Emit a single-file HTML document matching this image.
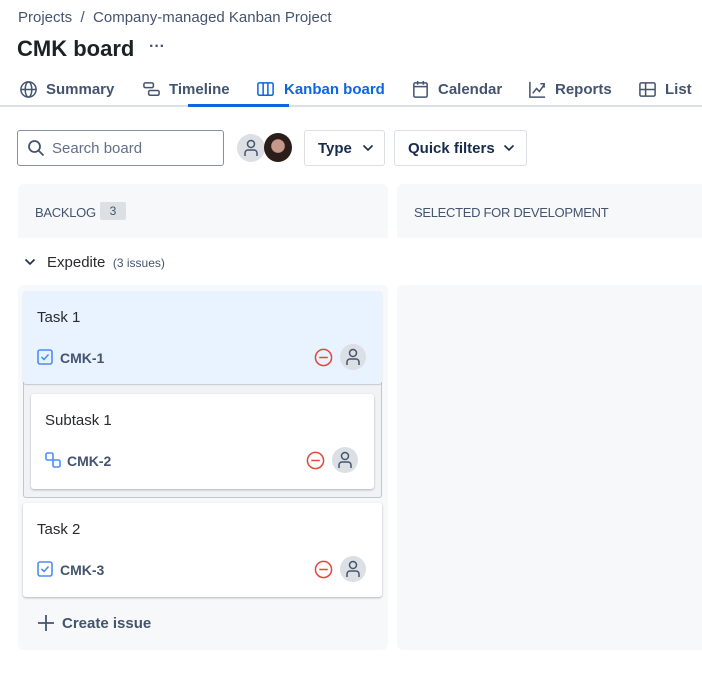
<!DOCTYPE html>
<html><head><style>
*{box-sizing:border-box;margin:0;padding:0}
body{width:702px;height:687px;overflow:hidden;background:#fff;font-family:"Liberation Sans",sans-serif;color:#172b4d;position:relative}
.a{position:absolute}
.txt{color:#44546f}
.btn{position:absolute;top:130px;height:36px;border:1px solid #dcdfe4;border-radius:3px;font-size:15px;color:#172b4d;font-weight:bold;display:flex;align-items:center;padding-left:13px}
.card{position:absolute;background:#fff;border-radius:3px;box-shadow:0 1px 2px rgba(9,30,66,.3)}
.t{position:absolute;left:14px;top:18px;font-size:15px;color:#292a2e}
.k{position:absolute;font-size:14px;color:#44546f;font-weight:bold}
.av{position:absolute;width:26px;height:26px;border-radius:50%;background:#dcdfe4}
</style></head><body>
<div class="a txt" style="left:18px;top:9px;font-size:15px">Projects&nbsp;&nbsp;/&nbsp;&nbsp;Company-managed Kanban Project</div>
<div class="a" style="left:17px;top:36px;font-size:22px;font-weight:bold;color:#1d2125">CMK board</div>
<div class="a" style="left:149px;top:38px;font-size:16px;font-weight:bold;color:#44546f">···</div>

<div class="a" style="left:0;top:105px;width:702px;height:2px;background:#dcdfe4"></div>
<div class="a" style="left:188px;top:104px;width:101px;height:3px;background:#0c66e4"></div>
<div class="a txt" style="top:80px;left:0;width:702px;height:20px;font-size:15px;font-weight:bold">
<svg class="a" style="left:19px;top:0" width="19" height="19" viewBox="0 0 20 20" fill="none" stroke="#44546f" stroke-width="1.6"><circle cx="10" cy="10" r="8"/><ellipse cx="10" cy="10" rx="3.5" ry="8"/><path d="M2 10h16"/></svg>
<span class="a" style="left:46px;top:1px">Summary</span>
<svg class="a" style="left:142px;top:0" width="19" height="19" viewBox="0 0 20 20" fill="none" stroke="#44546f" stroke-width="1.6"><rect x="2" y="3" width="10" height="5" rx="1.5"/><rect x="7" y="11" width="11" height="5" rx="1.5"/></svg>
<span class="a" style="left:169px;top:1px">Timeline</span>
<svg class="a" style="left:256px;top:0" width="19" height="19" viewBox="0 0 20 20" fill="none" stroke="#0c66e4" stroke-width="1.6"><rect x="2" y="3" width="16" height="13" rx="1.5"/><path d="M7.5 3v13M12.5 3v13"/></svg>
<span class="a" style="left:284px;top:1px;color:#0c66e4">Kanban board</span>
<svg class="a" style="left:411px;top:0" width="19" height="19" viewBox="0 0 20 20" fill="none" stroke="#44546f" stroke-width="1.6"><rect x="3" y="3" width="14" height="15" rx="1.5"/><path d="M3 7h14M7 1v4M13 1v4"/></svg>
<span class="a" style="left:438px;top:1px">Calendar</span>
<svg class="a" style="left:528px;top:0" width="19" height="19" viewBox="0 0 20 20" fill="none" stroke="#44546f" stroke-width="1.6"><path d="M2 2v16h16M5 14l4-5 3 3 5-7M13 4h4v4"/></svg>
<span class="a" style="left:555px;top:1px">Reports</span>
<svg class="a" style="left:638px;top:0" width="19" height="19" viewBox="0 0 20 20" fill="none" stroke="#44546f" stroke-width="1.6"><rect x="2" y="3" width="16" height="14" rx="1.5"/><path d="M2 10h16M8 3v14"/></svg>
<span class="a" style="left:665px;top:1px">List</span>
</div>

<div class="a" style="left:17px;top:130px;width:207px;height:36px;border:1px solid #8590a2;border-radius:3px"></div>
<svg class="a" style="left:27px;top:139px" width="18" height="18" viewBox="0 0 18 18" fill="none" stroke="#44546f" stroke-width="1.8"><circle cx="7.5" cy="7.5" r="5.5"/><path d="M11.5 11.5l5 5"/></svg>
<div class="a" style="left:52px;top:140px;font-size:15px;color:#626f86">Search board</div>
<div class="av" style="left:237px;top:134px;width:28px;height:28px"></div>
<svg class="a" style="left:243px;top:139px" width="16" height="18" viewBox="0 0 16 18" fill="none" stroke="#44546f" stroke-width="1.5"><circle cx="8" cy="5" r="3.5"/><path d="M2 17v-3a3 3 0 0 1 3-3h6a3 3 0 0 1 3 3v3"/></svg>
<div class="a" style="left:264px;top:133px;width:28px;height:29px;border-radius:50%;background:radial-gradient(circle at 50% 45%,#c7988a 0 30%,#2a1d1a 34%)"></div>
<div class="btn" style="left:304px;width:81px">Type <svg style="margin-left:10px" width="12" height="8" viewBox="0 0 12 8" fill="none" stroke="#172b4d" stroke-width="1.6"><path d="M1.5 1.5l4.5 4.5 4.5-4.5"/></svg></div>
<div class="btn" style="left:394px;width:133px">Quick filters <svg style="margin-left:8px" width="12" height="8" viewBox="0 0 12 8" fill="none" stroke="#172b4d" stroke-width="1.6"><path d="M1.5 1.5l4.5 4.5 4.5-4.5"/></svg></div>

<div class="a" style="left:18px;top:184px;width:370px;height:54px;background:#f7f8f9;border-radius:6px 6px 0 0"></div>
<div class="a" style="left:397px;top:184px;width:310px;height:54px;background:#f7f8f9;border-radius:6px 6px 0 0"></div>
<div class="a txt" style="left:35px;top:205px;font-size:13px;letter-spacing:-0.3px">BACKLOG</div>
<div class="a txt" style="left:100px;top:202px;width:26px;height:18px;background:#dcdfe4;border-radius:2px;font-size:12px;text-align:center;line-height:18px">3</div>
<div class="a txt" style="left:414px;top:205px;font-size:13px;letter-spacing:-0.3px">SELECTED FOR DEVELOPMENT</div>

<svg class="a" style="left:24px;top:258px" width="12" height="8" viewBox="0 0 12 8" fill="none" stroke="#172b4d" stroke-width="1.6"><path d="M1.5 1.5l4.5 4.5 4.5-4.5"/></svg>
<div class="a" style="left:47px;top:254px;font-size:15px;color:#292a2e">Expedite <span style="font-size:12px;color:#44546f">&nbsp;(3 issues)</span></div>

<div class="a" style="left:18px;top:285px;width:370px;height:365px;background:#f7f8f9;border-radius:6px"></div>
<div class="a" style="left:397px;top:285px;width:310px;height:365px;background:#f7f8f9;border-radius:6px"></div>

<div class="a" style="left:23px;top:380px;width:359px;height:118px;background:#f1f2f4;border:1px solid #c1c7d0;border-radius:3px"></div>
<div class="card" style="left:23px;top:291px;width:359px;height:93px;background:#e9f2ff;box-shadow:0 1px 1px rgba(9,30,66,.2)">
<div class="t">Task 1</div>
<svg class="a" style="left:14px;top:58px" width="16" height="16" viewBox="0 0 16 16" fill="none" stroke="#4c8df6" stroke-width="1.6"><rect x="1" y="1" width="14" height="14" rx="2"/><path d="M4.5 8l2.5 2.5 4.5-5"/></svg>
<div class="k" style="left:37px;top:59px">CMK-1</div>
<svg class="a" style="left:291px;top:57px" width="19" height="19" viewBox="0 0 20 20" fill="none" stroke="#e2483d" stroke-width="1.6"><circle cx="10" cy="10" r="8.5"/><path d="M5.5 10h9"/></svg>
<div class="av" style="left:317px;top:53px"></div>
<svg class="a" style="left:322px;top:57px" width="16" height="18" viewBox="0 0 16 18" fill="none" stroke="#44546f" stroke-width="1.5"><circle cx="8" cy="5" r="3.5"/><path d="M2 17v-3a3 3 0 0 1 3-3h6a3 3 0 0 1 3 3v3"/></svg>
</div>
<div class="card" style="left:31px;top:394px;width:343px;height:95px">
<div class="t">Subtask 1</div>
<svg class="a" style="left:14px;top:58px" width="16" height="16" viewBox="0 0 16 16" fill="none" stroke="#4c8df6" stroke-width="1.6"><rect x="1" y="1" width="7" height="7" rx="1.5"/><rect x="8" y="8" width="7" height="7" rx="1.5"/></svg>
<div class="k" style="left:36px;top:59px">CMK-2</div>
<svg class="a" style="left:275px;top:57px" width="19" height="19" viewBox="0 0 20 20" fill="none" stroke="#e2483d" stroke-width="1.6"><circle cx="10" cy="10" r="8.5"/><path d="M5.5 10h9"/></svg>
<div class="av" style="left:301px;top:53px"></div>
<svg class="a" style="left:306px;top:57px" width="16" height="18" viewBox="0 0 16 18" fill="none" stroke="#44546f" stroke-width="1.5"><circle cx="8" cy="5" r="3.5"/><path d="M2 17v-3a3 3 0 0 1 3-3h6a3 3 0 0 1 3 3v3"/></svg>
</div>
<div class="card" style="left:23px;top:503px;width:359px;height:94px">
<div class="t">Task 2</div>
<svg class="a" style="left:14px;top:58px" width="16" height="16" viewBox="0 0 16 16" fill="none" stroke="#4c8df6" stroke-width="1.6"><rect x="1" y="1" width="14" height="14" rx="2"/><path d="M4.5 8l2.5 2.5 4.5-5"/></svg>
<div class="k" style="left:37px;top:59px">CMK-3</div>
<svg class="a" style="left:291px;top:57px" width="19" height="19" viewBox="0 0 20 20" fill="none" stroke="#e2483d" stroke-width="1.6"><circle cx="10" cy="10" r="8.5"/><path d="M5.5 10h9"/></svg>
<div class="av" style="left:317px;top:53px"></div>
<svg class="a" style="left:322px;top:57px" width="16" height="18" viewBox="0 0 16 18" fill="none" stroke="#44546f" stroke-width="1.5"><circle cx="8" cy="5" r="3.5"/><path d="M2 17v-3a3 3 0 0 1 3-3h6a3 3 0 0 1 3 3v3"/></svg>
</div>
<svg class="a" style="left:37px;top:614px" width="18" height="18" viewBox="0 0 18 18" stroke="#44546f" stroke-width="1.8"><path d="M9 1v16M1 9h16"/></svg>
<div class="a txt" style="left:62px;top:615px;font-size:15px;font-weight:bold">Create issue</div>
</body></html>
